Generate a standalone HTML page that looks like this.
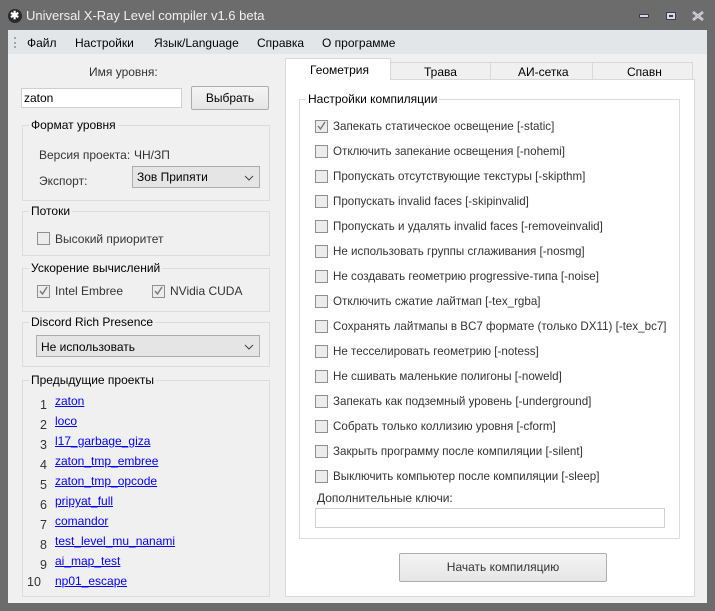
<!DOCTYPE html>
<html><head><meta charset="utf-8"><style>
*{margin:0;padding:0;box-sizing:border-box}
body{width:715px;height:611px;background:#6c6c6c;font-family:"Liberation Sans",sans-serif;font-size:12px;color:#000;position:relative;overflow:hidden}
.a{position:absolute}
.t{position:absolute;white-space:nowrap;line-height:14px}
.grp{position:absolute;border:1px solid #dcdcdc}
.gl{position:absolute;top:-8px;left:6px;background:#f0f0f0;padding:0 2px;line-height:14px;white-space:nowrap}
.cb{position:absolute;width:13px;height:13px;border:1px solid #8f8f8f;background:#ececec}
.cb svg{position:absolute;left:0px;top:0px}
.btn{position:absolute;border:1px solid #adadad;background:linear-gradient(#f4f4f4,#e6e6e6);text-align:center;border-radius:2px}
.combo{position:absolute;border:1px solid #acacac;background:#e5e5e5}
.lnk{color:#0000ff;text-decoration:underline}
</style></head><body>
<!-- title -->
<div class="a" style="left:8px;top:9px;width:14px;height:14px;border-radius:7px;background:#2a2a2a"></div>
<div class="t" style="left:10px;top:9px;color:#fff;font-size:11px;font-weight:bold">✱</div>
<div class="t" style="left:26px;top:9px;color:#f0f0f0;font-size:13px">Universal X-Ray Level compiler v1.6 beta</div>
<div class="a" style="left:639px;top:14px;width:10px;height:4px;border:1px solid #3c3c50;background:#d8d8e0"></div>
<div class="a" style="left:666px;top:12px;width:10px;height:8px;border:1px solid #3c3c50;background:#d8d8e0"><div class="a" style="left:2px;top:2px;width:4px;height:2px;background:#3c3c50"></div></div>
<svg class="a" style="left:692px;top:11px" width="12" height="10"><path d="M1 1L11 9M11 1L1 9" stroke="#e0e0e8" stroke-width="2.6"/><path d="M1 1L11 9M11 1L1 9" stroke="#3c3c50" stroke-width="0.6" opacity="0.4"/></svg>
<!-- client -->
<div class="a" style="left:8px;top:30px;width:699px;height:573px;background:#f0f0f0"></div>
<div class="a" style="left:8px;top:30px;width:699px;height:24px;background:#e2e6e9"></div>
<div class="a" style="left:14px;top:37px;width:2px;height:11px;border-left:2px dotted #9aa"></div>
<div class="t" style="left:27px;top:36px">Файл</div>
<div class="t" style="left:75px;top:36px">Настройки</div>
<div class="t" style="left:154px;top:36px">Язык/Language</div>
<div class="t" style="left:257px;top:36px">Справка</div>
<div class="t" style="left:322px;top:36px">О программе</div>
<!-- left -->
<div class="t" style="left:89px;top:65px;color:#333">Имя уровня:</div>
<div class="a" style="left:21px;top:88px;width:161px;height:20px;background:#fff;border:1px solid #d0d0d0"></div>
<div class="t" style="left:24px;top:91px">zaton</div>
<div class="btn" style="left:191px;top:86px;width:78px;height:24px;line-height:22px">Выбрать</div>

<div class="grp" style="left:22px;top:125px;width:248px;height:76px"><div class="gl">Формат уровня</div></div>
<div class="t" style="left:39px;top:148px;color:#333">Версия проекта:</div>
<div class="t" style="left:134px;top:148px;color:#333">ЧН/ЗП</div>
<div class="t" style="left:39px;top:174px;color:#333">Экспорт:</div>
<div class="combo" style="left:132px;top:166px;width:128px;height:22px"><div class="t" style="left:4px;top:3px">Зов Припяти</div><svg class="a" style="left:111px;top:8px" width="10" height="6"><path d="M1 1L5 5L9 1" fill="none" stroke="#444"/></svg></div>

<div class="grp" style="left:22px;top:211px;width:248px;height:45px"><div class="gl">Потоки</div></div>
<div class="cb" style="left:37px;top:232px"></div>
<div class="t" style="left:55px;top:232px;color:#333">Высокий приоритет</div>

<div class="grp" style="left:22px;top:268px;width:248px;height:44px"><div class="gl">Ускорение вычислений</div></div>
<div class="cb" style="left:37px;top:285px"><svg width="11" height="11"><path d="M2 5L4.5 8L9 1" fill="none" stroke="#777" stroke-width="1.4"/></svg></div>
<div class="t" style="left:55px;top:284px;color:#333">Intel Embree</div>
<div class="cb" style="left:152px;top:285px"><svg width="11" height="11"><path d="M2 5L4.5 8L9 1" fill="none" stroke="#777" stroke-width="1.4"/></svg></div>
<div class="t" style="left:170px;top:284px;color:#333">NVidia CUDA</div>

<div class="grp" style="left:22px;top:322px;width:248px;height:45px"><div class="gl">Discord Rich Presence</div></div>
<div class="combo" style="left:36px;top:335px;width:224px;height:22px"><div class="t" style="left:4px;top:4px">Не использовать</div><svg class="a" style="left:207px;top:8px" width="10" height="6"><path d="M1 1L5 5L9 1" fill="none" stroke="#444"/></svg></div>

<div class="grp" style="left:22px;top:380px;width:248px;height:217px"><div class="gl">Предыдущие проекты</div></div>
<div class="t" style="left:39px;top:395px;color:#333;line-height:20px;text-align:right;width:8px;font-size:12.5px">1<br>2<br>3<br>4<br>5<br>6<br>7<br>8<br>9<br></div>
<div class="t" style="left:27px;top:575px;color:#333;font-size:12.5px">10</div>
<div class="t" style="left:55px;top:391px;line-height:20px">
<span class="lnk">zaton</span><br><span class="lnk">loco</span><br><span class="lnk">l17_garbage_giza</span><br><span class="lnk">zaton_tmp_embree</span><br><span class="lnk">zaton_tmp_opcode</span><br><span class="lnk">pripyat_full</span><br><span class="lnk">comandor</span><br><span class="lnk">test_level_mu_nanami</span><br><span class="lnk">ai_map_test</span><br><span class="lnk">np01_escape</span></div>
<!-- tabs -->
<div class="a" style="left:285px;top:79px;width:410px;height:518px;background:#fff;border:1px solid #d9d9d9"></div>
<div class="a" style="left:390px;top:62px;width:101px;height:18px;background:#f0f0f0;border:1px solid #d9d9d9"></div>
<div class="a" style="left:490px;top:62px;width:103px;height:18px;background:#f0f0f0;border:1px solid #d9d9d9"></div>
<div class="a" style="left:592px;top:62px;width:101px;height:18px;background:#f0f0f0;border:1px solid #d9d9d9"></div>
<div class="a" style="left:285px;top:58px;width:106px;height:22px;background:#fff;border:1px solid #d9d9d9;border-bottom:none"></div>
<div class="t" style="left:310px;top:63px">Геометрия</div>
<div class="t" style="left:424px;top:65px">Трава</div>
<div class="t" style="left:518px;top:65px">АИ-сетка</div>
<div class="t" style="left:627px;top:65px">Спавн</div>

<div class="grp" style="left:299px;top:99px;width:381px;height:440px"><div class="gl" style="background:#fff">Настройки компиляции</div></div>
<div class="cb" style="left:315px;top:120px"><svg width="11" height="11"><path d="M2 5L4.5 8L9 1" fill="none" stroke="#777" stroke-width="1.4"/></svg></div>
<div class="cb" style="left:315px;top:145px"></div>
<div class="cb" style="left:315px;top:170px"></div>
<div class="cb" style="left:315px;top:195px"></div>
<div class="cb" style="left:315px;top:220px"></div>
<div class="cb" style="left:315px;top:245px"></div>
<div class="cb" style="left:315px;top:270px"></div>
<div class="cb" style="left:315px;top:295px"></div>
<div class="cb" style="left:315px;top:320px"></div>
<div class="cb" style="left:315px;top:345px"></div>
<div class="cb" style="left:315px;top:370px"></div>
<div class="cb" style="left:315px;top:395px"></div>
<div class="cb" style="left:315px;top:420px"></div>
<div class="cb" style="left:315px;top:445px"></div>
<div class="cb" style="left:315px;top:470px"></div>
<div class="t" style="left:333px;top:114px;line-height:25px;color:#333;font-size:11.6px">
Запекать статическое освещение [-static]<br>Отключить запекание освещения [-nohemi]<br>Пропускать отсутствующие текстуры [-skipthm]<br>Пропускать invalid faces [-skipinvalid]<br>Пропускать и удалять invalid faces [-removeinvalid]<br>Не использовать группы сглаживания [-nosmg]<br>Не создавать геометрию progressive-типа [-noise]<br>Отключить сжатие лайтмап [-tex_rgba]<br>Сохранять лайтмапы в BC7 формате (только DX11) [-tex_bc7]<br>Не тесселировать геометрию [-notess]<br>Не сшивать маленькие полигоны [-noweld]<br>Запекать как подземный уровень [-underground]<br>Собрать только коллизию уровня [-cform]<br>Закрыть программу после компиляции [-silent]<br>Выключить компьютер после компиляции [-sleep]</div>
<div class="t" style="left:317px;top:491px;color:#333">Дополнительные ключи:</div>
<div class="a" style="left:315px;top:508px;width:350px;height:20px;border:1px solid #d0d0d0;background:#fff"></div>
<div class="btn" style="left:399px;top:553px;width:208px;height:29px;line-height:27px;color:#333">Начать компиляцию</div>
</body></html>
